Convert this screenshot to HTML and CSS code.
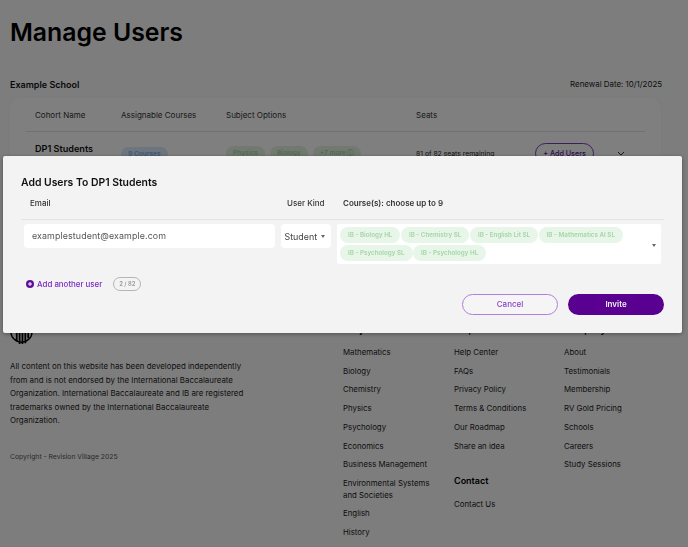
FILE: index.html
```html
<!DOCTYPE html>
<html lang="en">
<head>
<meta charset="utf-8">
<title>Manage Users</title>
<link rel="stylesheet" href="styles.css">
</head>
<body>
<main class="page">
  <h1 class="title">Manage Users</h1>
  <div class="school-row">
    <span class="school">Example School</span>
    <span class="renewal">Renewal Date: 10/1/2025</span>
  </div>
  <section class="card">
    <div class="table-row head">
      <span>Cohort Name</span>
      <span>Assignable Courses</span>
      <span>Subject Options</span>
      <span>Seats</span>
    </div>
    <div class="table-row body-row">
      <strong class="cohort">DP1 Students</strong>
      <span class="tags"><span class="tag blue">9 Courses</span></span>
      <span class="tags"><span class="tag green">Physics</span><span class="tag green">Biology</span><span class="tag green">+7 more ⓘ</span></span>
      <span class="seats">81 of 82 seats remaining</span>
      <span class="add-users">+ Add Users</span>
      <svg class="chev" viewBox="0 0 8 5" width="8" height="5"><path d="M1 1l3 3 3-3" fill="none" stroke="#333" stroke-width="1"/></svg>
    </div>
  </section>
  <footer class="footer">
    <div class="about">
      <svg class="logo" viewBox="0 0 24 24" width="23" height="23">
        <path d="M1 9a11 11 0 0 0 22 0" fill="none" stroke="#000" stroke-width="1.5"/>
        <path d="M7 10v9M10 8v14M13 8v14M16 8v13M19 8v8" stroke="#000" stroke-width="1.8"/>
      </svg>
      <p class="legal">All content on this website has been developed independently from and is not endorsed by the International Baccalaureate Organization. International Baccalaureate and IB are registered trademarks owned by the International Baccalaureate Organization.</p>
      <p class="copyright">Copyright - Revision Village 2025</p>
    </div>
    <nav class="links first">
      <h2>Subjects</h2>
      <a>Mathematics</a><a>Biology</a><a>Chemistry</a><a>Physics</a><a>Psychology</a><a>Economics</a><a>Business Management</a><a>Environmental Systems and Societies</a><a>English</a><a>History</a>
    </nav>
    <nav class="links">
      <h2>Help</h2>
      <a>Help Center</a><a>FAQs</a><a>Privacy Policy</a><a>Terms &amp; Conditions</a><a>Our Roadmap</a><a>Share an idea</a>
      <h2 class="contact">Contact</h2>
      <a>Contact Us</a>
    </nav>
    <nav class="links">
      <h2>Company</h2>
      <a>About</a><a>Testimonials</a><a>Membership</a><a>RV Gold Pricing</a><a>Schools</a><a>Careers</a><a>Study Sessions</a>
    </nav>
  </footer>
</main>

<div class="overlay">
  <div class="modal">
    <h2 class="modal-title">Add Users To DP1 Students</h2>
    <div class="form-grid labels">
      <span class="label-email">Email</span>
      <span class="label-kind">User Kind</span>
      <span class="label-course">Course(s): choose up to 9</span>
    </div>
    <div class="form-grid fields">
      <div class="input">examplestudent@example.com</div>
      <div class="select">Student<i class="caret"></i></div>
      <div class="courses">
        <div class="chips">
          <span class="chip">IB - Biology HL</span><span class="chip">IB - Chemistry SL</span><span class="chip">IB - English Lit SL</span><span class="chip">IB - Mathematics AI SL</span><span class="chip">IB - Psychology SL</span><span class="chip">IB - Psychology HL</span>
        </div>
        <i class="caret"></i>
      </div>
    </div>
    <div class="add-row">
      <svg class="plus" viewBox="0 0 8 8" width="8" height="8"><circle cx="4" cy="4" r="4" fill="#5f0f9e"/><path d="M4 2v4M2 4h4" stroke="#fff" stroke-width="1"/></svg>
      <span class="add-link">Add another user</span>
      <span class="count">2 / 82</span>
    </div>
    <div class="actions">
      <button class="btn cancel" type="button">Cancel</button>
      <button class="btn invite" type="button">Invite</button>
    </div>
  </div>
</div>
</body>
</html>
```
FILE: styles.css
```css
* { box-sizing: border-box; }
html, body { margin: 0; height: 100%; }
body {
  background: #fbfbfb;
  color: #111;
  font-family: Inter, "Liberation Sans", sans-serif;
  overflow: hidden;
}
.page { padding: 0 10px; height: 547px; overflow: hidden; }
.title {
  margin: 0;
  padding-top: 14px;
  font-size: 24.8px;
  line-height: 36px;
  font-weight: 600;
  color: #000;
}
.school-row {
  display: flex;
  justify-content: space-between;
  align-items: center;
  margin-top: 27px;
  height: 14px;
  padding-right: 16px;
}
.school { font-size: 9px; font-weight: 600; }
.renewal { font-size: 7.9px; color: #222; }
.card {
  margin-top: 7px;
  width: 651px;
  height: 90px;
  background: #fff;
  border-radius: 10px;
  padding: 0 16px;
  box-shadow: 0 0 4px rgba(0,0,0,.05);
}
.table-row {
  display: grid;
  grid-template-columns: 86px 105px 190px 119px 86px 1fr;
  padding-left: 9px;
  align-items: center;
}
.head {
  height: 34px;
  border-bottom: 1px solid #e2e2e2;
  font-size: 8px;
  color: #333;
}
.body-row { padding-top: 11px; }
.cohort { font-size: 9.1px; font-weight: 600; margin-top: -11px; }
.tags { display: flex; gap: 5px; }
.tag { display: inline-block; padding: 3px 7px; border-radius: 9px; font-size: 6.6px; font-weight: 600; }
.tag.blue { background: #dbeafe; color: #7fb2e5; }
.tag.green { background: #e3f3e3; color: #a5d6a7; }
.seats { font-size: 6.8px; color: #222; }
.add-users {
  width: 59px;
  height: 21px;
  line-height: 19px;
  text-align: center;
  border: 1px solid #7c3cb8;
  border-radius: 11px;
  color: #5f0f9e;
  font-size: 7.2px;
  font-weight: 500;
}
.chev { justify-self: start; margin-left: -4px; }
.footer {
  display: grid;
  grid-template-columns: 333px 111px 110px 1fr;
  margin-top: 133px;
}
.about { padding-top: 2px; }
.logo { display: block; }
.legal {
  margin: 14px 0 0;
  width: 240px;
  font-size: 7.9px;
  line-height: 13.55px;
  color: #222;
}
.copyright { margin: 24px 0 0; font-size: 6.8px; color: #555; }
.links { display: flex; flex-direction: column; padding-top: 3px; }
.links h2 { margin: 0 0 11px; font-size: 9px; line-height: 12px; font-weight: 600; color: #000; }
.links a {
  font-size: 7.85px;
  line-height: 11.6px;
  margin-bottom: 7.15px;
  color: #222;
  width: 100px;
}
.links h2.contact { margin: 15.5px 0 12.5px; }
.overlay { position: fixed; inset: 0; background: rgba(0,0,0,.5); }
.modal {
  position: absolute;
  left: 3px;
  top: 156px;
  width: 679px;
  height: 176.5px;
  padding: 20px 18px 0 18px;
  background: #f3f3f3;
  border-radius: 2px;
  box-shadow: 0 1px 4px rgba(0,0,0,.35);
}
.modal-title { margin: 0; font-size: 10.4px; line-height: 13px; font-weight: 600; color: #111; }
.form-grid { display: grid; grid-template-columns: 260px 56px 1fr; }
.labels {
  margin-top: 9px;
  padding-bottom: 11px;
  border-bottom: 1px solid #e4e4e4;
  font-size: 8px;
  line-height: 10px;
  font-weight: 500;
  color: #333;
}
.label-email { padding-left: 9px; }
.label-kind { padding-left: 6px; }
.label-course { padding-left: 6px; font-weight: 600; }
.fields { margin-top: 4px; padding-left: 3px; grid-template-columns: 251px 56px 1fr; align-items: start; }
.input {
  height: 24px;
  background: #fff;
  border-radius: 4px;
  padding-left: 8px;
  font-size: 8.9px;
  line-height: 24px;
  color: #555;
  letter-spacing: .1px;
}
.select {
  margin-left: 6px;
  width: 50px;
  height: 24px;
  background: #fff;
  border-radius: 4px;
  padding-left: 3.5px;
  font-size: 8.9px;
  color: #444;
  display: flex;
  align-items: center;
  gap: 4px;
}
.caret {
  display: block;
  flex: none;
  width: 0;
  height: 0;
  border: 2.5px solid transparent;
  border-top: 3px solid #666;
  border-bottom: 0;
}
.courses {
  margin-left: 6px;
  width: 324px;
  height: 40px;
  background: #fff;
  border-radius: 2px;
  padding: 3px 5px 0 3px;
  display: flex;
  align-items: center;
  justify-content: space-between;
}
.courses .chips { align-self: flex-start; }
.chips { display: flex; flex-wrap: wrap; gap: 2px 0; width: 295px; }
.chip {
  height: 16px;
  line-height: 16px;
  padding: 0 8px;
  margin-right: .5px;
  border-radius: 8px;
  background: #e8f5e9;
  color: #a5d6a7;
  font-size: 6.28px;
  font-weight: 600;
}
.add-row {
  display: flex;
  align-items: center;
  margin-top: 12px;
  padding-left: 5px;
  height: 16px;
}
.plus { margin-right: 3px; }
.add-link { font-size: 7.9px; font-weight: 500; color: #7a2bc4; }
.count {
  margin-left: 11px;
  width: 28px;
  height: 14px;
  line-height: 12px;
  border: 1px solid #b5b5b5;
  border-radius: 7px;
  text-align: center;
  font-size: 5.9px;
  font-weight: 600;
  color: #999;
}
.actions {
  display: flex;
  justify-content: flex-end;
  gap: 10px;
  margin-top: 1.5px;
}
.btn {
  width: 96px;
  height: 21px;
  border-radius: 11px;
  font-family: inherit;
  font-size: 8px;
  font-weight: 500;
  padding: 0;
}
.cancel { background: #f5f5f5; border: 1px solid #b07fe0; color: #8b3fc7; }
.invite { background: #5a0091; border: 0; color: #f2f2f2; font-weight: 600; }
```
